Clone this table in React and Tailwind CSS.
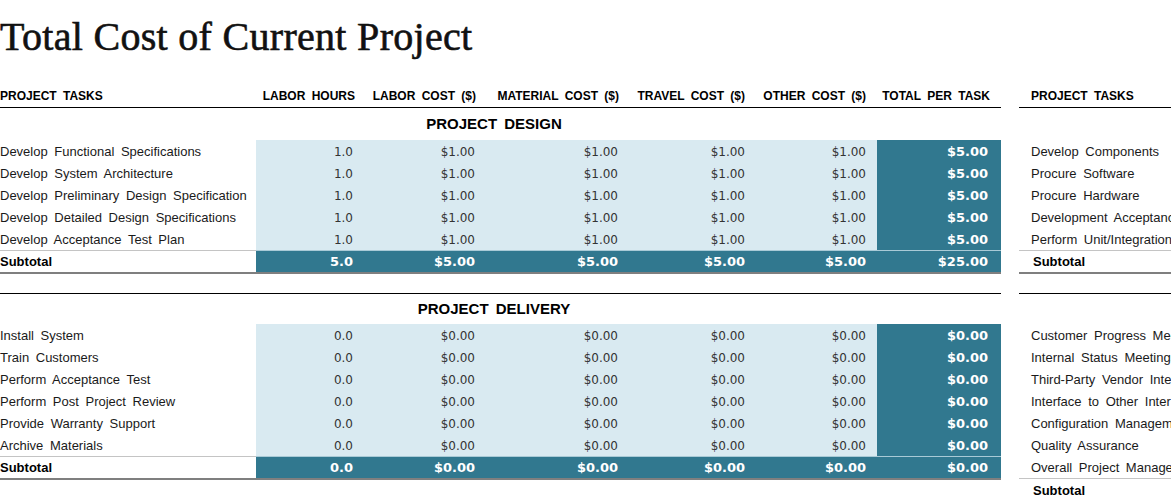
import React from "react"

const design = [
  "Develop Functional Specifications",
  "Develop System Architecture",
  "Develop Preliminary Design Specification",
  "Develop Detailed Design Specifications",
  "Develop Acceptance Test Plan",
]

const delivery = [
  "Install System",
  "Train Customers",
  "Perform Acceptance Test",
  "Perform Post Project Review",
  "Provide Warranty Support",
  "Archive Materials",
]

const buildTasks = [
  "Develop Components",
  "Procure Software",
  "Procure Hardware",
  "Development Acceptance Test Package",
  "Perform Unit/Integration Test",
]

const mgmtTasks = [
  "Customer Progress Meetings/Reports",
  "Internal Status Meetings",
  "Third-Party Vendor Interface",
  "Interface to Other Internal Departments",
  "Configuration Management",
  "Quality Assurance",
  "Overall Project Management",
]

const grid = "grid grid-cols-[256px_103px_121px_143px_126px_128px_124px]"
const headPads = ["pr-[4px]", "pr-[4px]", "pr-[4px]", "pr-[4px]", "pr-[11px]", "pr-[11px]"]
const valPads = ["pr-[6px]", "pr-[5px]", "pr-[5px]", "pr-[4px]", "pr-[11px]", "pr-[13px]"]
const headers = ["LABOR HOURS", "LABOR COST ($)", "MATERIAL COST ($)", "TRAVEL COST ($)", "OTHER COST ($)", "TOTAL PER TASK"]

const sans = "font-['Liberation_Sans',Arial,sans-serif]"
const num = "font-['DejaVu_Sans',Verdana,sans-serif]"
const words = "[word-spacing:3px]"

const DataRow = ({ task, values }) => (
  <div className={`${grid} h-[22px]`}>
    <div className={`${sans} ${words} flex items-center pt-[1px] whitespace-nowrap text-[13px] text-[#1a1a1a]`}>{task}</div>
    {values.map((v, i) => (
      <div
        key={i}
        className={`flex items-center justify-end pt-[1px] ${valPads[i]} ${
          i === 5
            ? `bg-[#31788f] text-white font-bold text-[13px] ${num}`
            : `bg-[#d9eaf1] text-[#333] text-[12px] ${num}`
        }`}
      >
        {v}
      </div>
    ))}
  </div>
)

const SubtotalRow = ({ values }) => (
  <div className={`${grid} h-[24px] border-b-2 border-[#7f7f7f]`}>
    <div className={`${sans} flex items-center border-t border-[#c4c4c4] text-[13px] font-bold text-black`}>Subtotal</div>
    {values.map((v, i) => (
      <div
        key={i}
        className={`flex items-center justify-end border-t border-[#a9cad6] bg-[#31788f] ${valPads[i]} ${num} text-[13px] font-bold text-white`}
      >
        {v}
      </div>
    ))}
  </div>
)

const Section = ({ title, tasks, hours, cost, total, sub, first }) => (
  <div className={first ? "" : "mt-[19px] border-t border-black"}>
    <div className={`${sans} ${words} flex w-[988px] items-center justify-center text-[15px] font-bold text-black ${first ? "h-[32px]" : "h-[30px]"}`}>
      {title}
    </div>
    {tasks.map((t) => (
      <DataRow key={t} task={t} values={[hours, cost, cost, cost, cost, total]} />
    ))}
    <SubtotalRow values={sub} />
  </div>
)

const RightTask = ({ children }) => (
  <div className={`${sans} ${words} flex h-[22px] items-center pt-[1px] whitespace-nowrap pl-[12px] text-[13px] text-[#1a1a1a]`}>
    {children}
  </div>
)

export default function App() {
  return (
    <div className="h-[496px] w-[1171px] overflow-hidden bg-white">
      <div className="h-[85px] pt-[17px]">
        <h1 className="font-['Liberation_Serif','Times_New_Roman',serif] text-[40px] leading-[40px] tracking-[0.3px] text-[#111] [-webkit-text-stroke:0.6px_#111]">
          Total Cost of Current Project
        </h1>
      </div>
      <div className="flex">
        <div className="w-[1001px] shrink-0">
          <div className={`${grid} h-[23px] border-b border-black ${sans} ${words} text-[12px] font-bold text-black`}>
            <div className="flex items-center">PROJECT TASKS</div>
            {headers.map((h, i) => (
              <div key={h} className={`flex items-center justify-end whitespace-nowrap ${headPads[i]}`}>
                {h}
              </div>
            ))}
          </div>
          <Section
            first
            title="PROJECT DESIGN"
            tasks={design}
            hours="1.0"
            cost="$1.00"
            total="$5.00"
            sub={["5.0", "$5.00", "$5.00", "$5.00", "$5.00", "$25.00"]}
          />
          <Section
            title="PROJECT DELIVERY"
            tasks={delivery}
            hours="0.0"
            cost="$0.00"
            total="$0.00"
            sub={["0.0", "$0.00", "$0.00", "$0.00", "$0.00", "$0.00"]}
          />
        </div>
        <div className="ml-[18px] w-[200px] shrink-0">
          <div className={`flex h-[23px] items-center border-b border-black pl-[12px] ${sans} ${words} text-[12px] font-bold text-black`}>
            PROJECT TASKS
          </div>
          <div className="h-[32px]" />
          {buildTasks.map((t) => (
            <RightTask key={t}>{t}</RightTask>
          ))}
          <div className={`flex h-[24px] items-center border-t border-b-2 border-t-[#c4c4c4] border-b-[#7f7f7f] pl-[14px] ${sans} text-[13px] font-bold text-black`}>
            Subtotal
          </div>
          <div className="mt-[19px] border-t border-black">
            <div className="h-[30px]" />
            {mgmtTasks.map((t) => (
              <RightTask key={t}>{t}</RightTask>
            ))}
            <div className={`flex h-[24px] items-center border-t border-[#c4c4c4] pl-[14px] ${sans} text-[13px] font-bold text-black`}>
              Subtotal
            </div>
          </div>
        </div>
      </div>
    </div>
  )
}
